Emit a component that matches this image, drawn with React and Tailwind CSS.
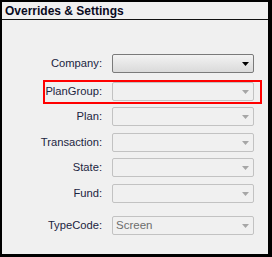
import React from 'react';

const font = { fontFamily: '"Liberation Sans", Arial, sans-serif' };

const Arrow = ({ dark }) => (
  <svg width="7" height="4" viewBox="0 0 7 4" className="shrink-0">
    <path d="M0 0H7L3.5 4Z" fill={dark ? '#000000' : '#a6a6a6'} />
  </svg>
);

const Field = ({ label, value, active, highlight, className = '' }) => (
  <div className={`relative flex items-center ${className}`}>
    {highlight && (
      <span className="pointer-events-none absolute left-[41px] right-[6px] top-[-2px] bottom-[-3px] border-2 border-[#ff0000]" />
    )}
    <div className="w-[101px] pr-[1px] pt-[1px] text-right text-[11.2px] leading-none text-[#1b2440]">{label}</div>
    <div
      className={`ml-[9px] flex h-[19px] w-[142px] items-center justify-between rounded-[2px] border pl-[3px] pr-[4px] ${
        active
          ? 'border-[#7a7a7a] bg-gradient-to-b from-[#f3f3f3] to-[#dadada]'
          : 'border-[#c2c2c2] bg-[#f0f0f0]'
      }`}
    >
      <span className="text-[11.5px] leading-none text-[#6d6d6d]">{value}</span>
      <Arrow dark={active} />
    </div>
  </div>
);

export default function App() {
  return (
    <div
      style={font}
      className="flex h-[257px] w-[272px] flex-col border-b-[3px] border-l-2 border-r-4 border-t-2 border-black bg-[#f0f0f0]"
    >
      <div className="flex h-[18px] items-center border-b border-[#111] pl-[3px] text-[12px] font-bold text-[#0a0a1e]">
        Overrides &amp; Settings
      </div>
      <div className="flex flex-col pt-[34px]">
        <Field label="Company:" active />
        <Field label="PlanGroup:" highlight className="mt-[9px]" />
        <Field label="Plan:" className="mt-[6px]" />
        <Field label="Transaction:" className="mt-[7px]" />
        <Field label="State:" className="mt-[6px]" />
        <Field label="Fund:" className="mt-[7px]" />
        <Field label="TypeCode:" value="Screen" className="mt-[13px]" />
      </div>
    </div>
  );
}
